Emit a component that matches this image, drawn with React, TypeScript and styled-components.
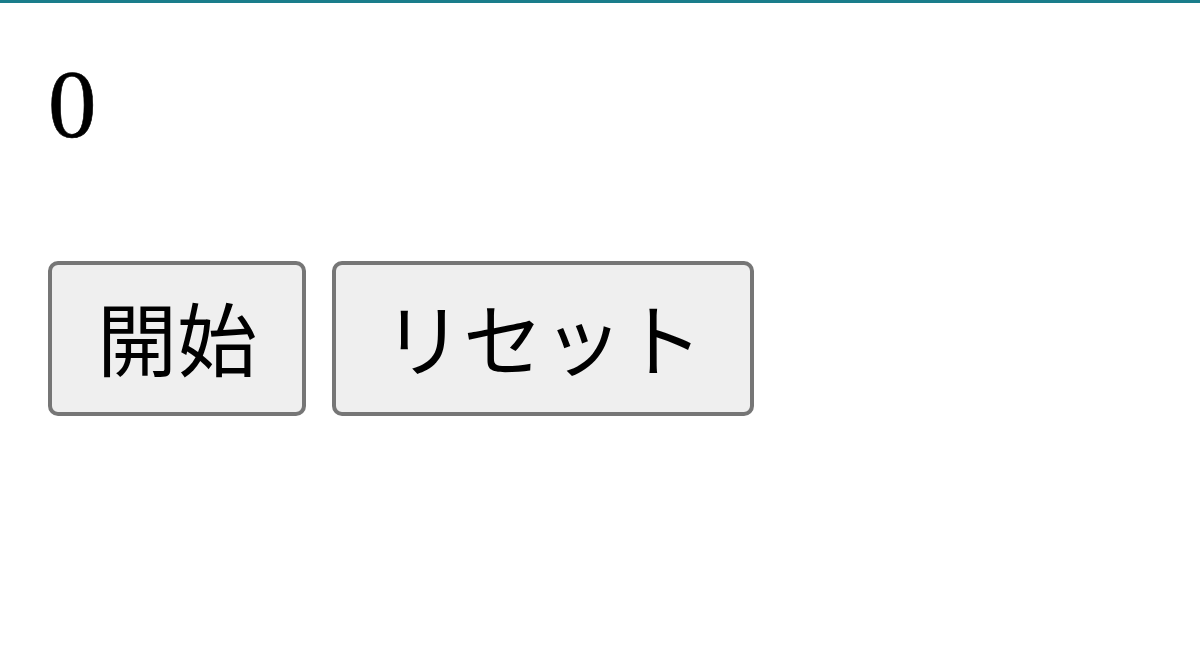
import React, { useState, useRef } from "react";
import styled, { createGlobalStyle } from "styled-components";

const GlobalStyle = createGlobalStyle`
  html, body { margin: 0; padding: 0; background: #ffffff; }
  body { border-top: 3px solid #1a7d8b; }
`;

const Page = styled.main`
  display: flex;
  flex-direction: column;
  align-items: flex-start;
  padding: 53px 48px 0 48px;
`;

const Counter = styled.div`
  font-family: "Liberation Serif", "Times New Roman", serif;
  font-size: 97px;
  line-height: 97px;
  color: #000;
  -webkit-text-stroke: 0.6px #000;
`;

const ButtonRow = styled.div`
  display: flex;
  gap: 26px;
  margin-top: 108px;
`;

const Button = styled.button<{ $extra?: number }>`
  font-family: "Noto Sans CJK JP", "Noto Sans", sans-serif;
  font-size: 80px;
  line-height: 1;
  color: #000;
  background: #efefef;
  border: 4px solid #767676;
  border-radius: 10px;
  height: 155px;
  padding: 0 ${(p) => 45 + (p.$extra ?? 0)}px 8px;
  display: flex;
  align-items: center;
  justify-content: center;
  cursor: pointer;
`;

export default function App() {
  const [count, setCount] = useState(0);
  const timer = useRef<number | null>(null);
  const start = () => {
    if (timer.current !== null) return;
    timer.current = window.setInterval(() => setCount((c) => c + 1), 1000);
  };
  const reset = () => {
    if (timer.current !== null) {
      window.clearInterval(timer.current);
      timer.current = null;
    }
    setCount(0);
  };
  return (
    <>
      <GlobalStyle />
      <Page>
        <Counter>{count}</Counter>
        <ButtonRow>
          <Button onClick={start}>開始</Button>
          <Button $extra={2} onClick={reset}>リセット</Button>
        </ButtonRow>
      </Page>
    </>
  );
}
